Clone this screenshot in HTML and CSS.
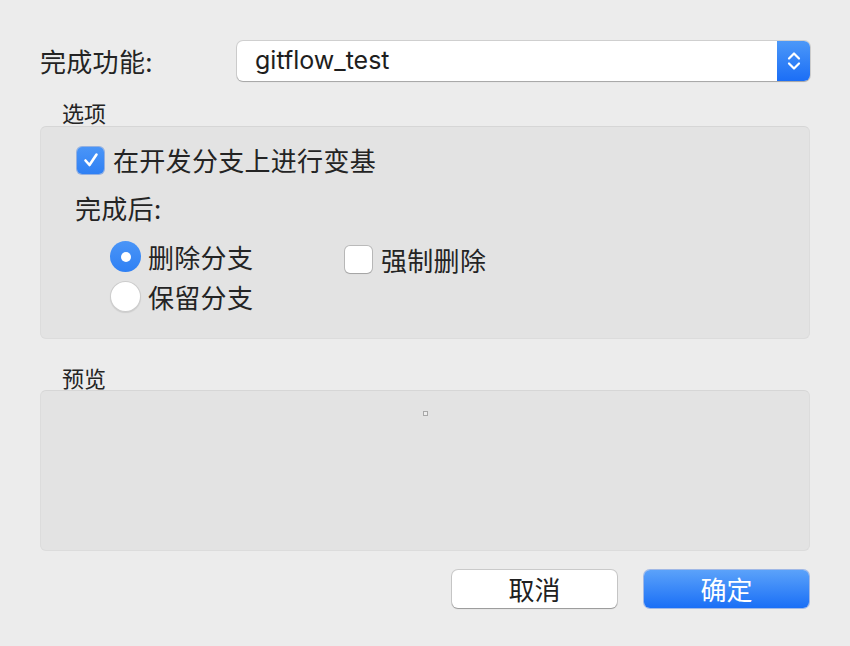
FILE: index.html
```html
<!DOCTYPE html>
<html lang="zh">
<head>
<meta charset="utf-8">
<title>完成功能</title>
<link rel="stylesheet" href="styles.css">
</head>
<body>
<div class="dialog">
  <div class="row-target">
    <div class="target-label">完成功能:</div>
    <div class="popup">
      <span class="popup-text">gitflow_test</span>
      <span class="stepper">
        <svg width="16" height="24" viewBox="0 0 16 24"><path d="M3 9.5 L8 4.5 L13 9.5" fill="none" stroke="#fff" stroke-width="2.2" stroke-linecap="round" stroke-linejoin="round"/><path d="M3 14.5 L8 19.5 L13 14.5" fill="none" stroke="#fff" stroke-width="2.2" stroke-linecap="round" stroke-linejoin="round"/></svg>
      </span>
    </div>
  </div>

  <div class="section-label first">选项</div>
  <div class="box options">
    <label class="check-row">
      <span class="checkbox checked">
        <svg width="20" height="20" viewBox="0 0 20 20"><path d="M4.5 10.5 L8.5 15 L15.5 4.5" fill="none" stroke="#fff" stroke-width="2.6" stroke-linecap="round" stroke-linejoin="round"/></svg>
      </span>
      <span class="text">在开发分支上进行变基</span>
    </label>
    <div class="after-label">完成后:</div>
    <div class="choices">
      <div class="radio-col">
        <label class="radio-row">
          <span class="radio checked"><span class="dot"></span></span>
          <span class="text">删除分支</span>
        </label>
        <label class="radio-row second">
          <span class="radio"></span>
          <span class="text">保留分支</span>
        </label>
      </div>
      <label class="force-row">
        <span class="checkbox"></span>
        <span class="text">强制删除</span>
      </label>
    </div>
  </div>

  <div class="section-label second">预览</div>
  <div class="box preview">
    <span class="tiny"></span>
  </div>

  <div class="buttons">
    <button class="btn cancel">取消</button>
    <button class="btn ok">确定</button>
  </div>
</div>
</body>
</html>
```

FILE: styles.css
```css
* { box-sizing: border-box; }
html, body {
  margin: 0;
  padding: 0;
  background: #ececec;
}
body {
  width: 850px;
  height: 646px;
  overflow: hidden;
  font-family: Inter, "Noto Sans CJK SC", sans-serif;
  color: #242424;
}
.dialog {
  padding: 41px 40px 0 40px;
  display: flex;
  flex-direction: column;
}
.row-target {
  display: flex;
  align-items: center;
  height: 40px;
}
.target-label {
  width: 197px;
  font-size: 26px;
  line-height: 40px;
  letter-spacing: 0.3px;
  font-family: "Noto Sans CJK SC", sans-serif;
}
.popup {
  flex: 1;
  height: 40px;
  display: flex;
  align-items: stretch;
  background: #fff;
  border-radius: 6px;
  box-shadow: 0 0 0 1px rgba(0,0,0,0.12), 0 1px 1px rgba(0,0,0,0.2);
  overflow: hidden;
}
.popup-text {
  flex: 1;
  padding-left: 18px;
  font-size: 25px;
  line-height: 39px;
  color: #1e1e1e;
}
.stepper {
  width: 33px;
  background: linear-gradient(#4c98f8, #1b6ef6);
  display: flex;
  align-items: center;
  justify-content: center;
}
.section-label {
  font-family: "Noto Sans CJK SC", sans-serif;
  font-size: 22px;
  line-height: 24px;
  padding-left: 22px;
  display: flex;
  align-items: flex-end;
  padding-bottom: 2px;
}
.section-label.first { height: 45px; }
.section-label.second { height: 51px; padding-bottom: 1px; }
.box {
  background: #e3e3e3;
  border: 1px solid #dcdcdc;
  border-top-color: #d6d6d6;
  border-radius: 6px;
}
.options {
  height: 213px;
  padding: 19px 0 0 36px;
  display: flex;
  flex-direction: column;
}
.text {
  font-family: "Noto Sans CJK SC", sans-serif;
  font-size: 26px;
  line-height: 30px;
  letter-spacing: 0.3px;
}
.check-row {
  display: flex;
  align-items: center;
  height: 28px;
}
.checkbox {
  width: 27px;
  height: 27px;
  border-radius: 5px;
  background: #fff;
  box-shadow: 0 0 0 1px rgba(0,0,0,0.18), 0 1px 1px rgba(0,0,0,0.12);
  display: flex;
  align-items: center;
  justify-content: center;
  flex: none;
}
.checkbox.checked {
  background: linear-gradient(#4a95f7, #2f80f4);
  box-shadow: 0 0 0 1px rgba(30,100,220,0.4);
}
.check-row .text { margin-left: 9px; }
.after-label {
  margin-top: 19px;
  height: 30px;
  font-family: "Noto Sans CJK SC", sans-serif;
  font-size: 26px;
  line-height: 30px;
  letter-spacing: 0.3px;
  margin-left: -2px;
}
.choices {
  margin-top: 18px;
  margin-left: 33px;
  display: flex;
  align-items: flex-start;
}
.radio-col {
  width: 235px;
  display: flex;
  flex-direction: column;
}
.radio-row {
  display: flex;
  align-items: center;
  height: 31px;
}
.radio-row.second { margin-top: 9px; }
.radio {
  width: 31px;
  height: 31px;
  border-radius: 50%;
  background: #fff;
  box-shadow: inset 0 0 0 1px rgba(0,0,0,0.2), 0 1px 1px rgba(0,0,0,0.1);
  display: flex;
  align-items: center;
  justify-content: center;
  flex: none;
}
.radio.checked {
  background: linear-gradient(#4a95f7, #2f80f4);
  box-shadow: none;
}
.dot {
  width: 10px;
  height: 10px;
  border-radius: 50%;
  background: #fff;
}
.radio-row .text { margin-left: 7px; }
.force-row {
  display: flex;
  align-items: center;
  height: 31px;
  margin-top: 3px;
}
.force-row .text { margin-left: 9px; }
.preview {
  height: 161px;
  display: flex;
  justify-content: center;
  align-items: flex-start;
  padding-top: 20px;
}
.tiny {
  width: 5px;
  height: 5px;
  border: 1px solid #a8a8a8;
  background: #eee;
}
.buttons {
  margin-top: 19px;
  display: flex;
  justify-content: flex-end;
  gap: 27px;
  padding-right: 1px;
}
.btn {
  width: 165px;
  height: 38px;
  border: none;
  border-radius: 6px;
  font-family: "Noto Sans CJK SC", sans-serif;
  font-size: 26px;
  line-height: 38px;
  padding: 0;
  cursor: default;
}
.cancel {
  background: #fff;
  color: #202020;
  box-shadow: 0 0 0 1px rgba(0,0,0,0.14), 0 1px 1px rgba(0,0,0,0.25);
}
.ok {
  background: linear-gradient(#5ba2fa, #1a6ff6);
  color: #fff;
  box-shadow: 0 0 0 1px rgba(20,90,220,0.35);
}
```
